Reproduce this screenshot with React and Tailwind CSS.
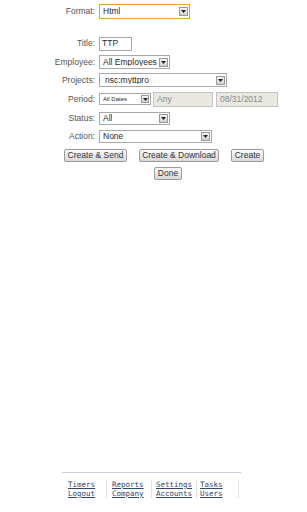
import React from "react";

function Arrow({ box = "w-[9px] h-[9px]" }) {
  return (
    <span
      className={`${box} mr-[1px] flex items-center justify-center border border-[#9a9a9a] bg-gradient-to-b from-[#f6f6f6] to-[#d2d2d2] shrink-0`}
    >
      <svg width="5" height="3" viewBox="0 0 5 3">
        <path d="M0 0h5L2.5 3z" fill="#222" />
      </svg>
    </span>
  );
}

function Select({ value, w, h, border = "border-[#a9a9a9]", text = "text-[8.5px]", box, pad = "pl-[3px]" }) {
  return (
    <div
      className={`${w} ${h} ${border} ${text} ${pad} border bg-white flex items-center justify-between text-[#2a2a2a] leading-none`}
    >
      <span className="truncate">{value}</span>
      <Arrow box={box} />
    </div>
  );
}

function Row({ label, h, children }) {
  return (
    <div className={`flex items-center ${h}`}>
      <div className="w-[96px] pr-[1px] text-right text-[#555]">{label}</div>
      <div className="ml-[3px] flex items-center">{children}</div>
    </div>
  );
}

function Button({ children, w }) {
  return (
    <div
      className={`${w} h-[13px] flex items-center justify-center rounded-[2px] border border-[#9b9b9b] bg-gradient-to-b from-[#fafafa] to-[#d9d9d9] text-[#333] leading-none`}
    >
      {children}
    </div>
  );
}

const links = [
  ["Timers", "Logout", "w-[45px] pl-[6px]"],
  ["Reports", "Company", "w-[45px] pl-[5px]"],
  ["Settings", "Accounts", "w-[45px] pl-[4px]"],
  ["Tasks", "Users", "w-[42px] pl-[3px]"],
];

export default function App() {
  return (
    <div
      className="h-[512px] bg-white flex flex-col text-[8.5px]"
      style={{ fontFamily: '"Liberation Sans", Arial, sans-serif' }}
    >
      <div className="pt-[2px]">
        <Row label="Format:" h="h-[18px]">
          <Select value="Html" w="w-[91px]" h="h-[15px]" border="border-[#e3a33a]" />
        </Row>
        <div className="h-[14px]" />
        <Row label="Title:" h="h-[19px]">
          <div className="w-[33px] h-[14px] border border-[#a9a9a9] bg-white pl-[2px] flex items-center text-[#2a2a2a] leading-none">
            TTP
          </div>
        </Row>
        <Row label="Employee:" h="h-[18px]">
          <Select value="All Employees" w="w-[71px]" h="h-[14px]" />
        </Row>
        <Row label="Projects:" h="h-[18px]">
          <Select value="nsc:myttpro" w="w-[128px]" h="h-[14px]" pad="pl-[5px]" />
        </Row>
        <Row label="Period:" h="h-[20px]">
          <Select value="All Dates" w="w-[52px]" h="h-[12px]" text="text-[6px]" box="w-[8px] h-[8px]" />
          <div className="ml-[2px] w-[60px] h-[15px] border border-[#c4c4c4] bg-[#e9e9e1] pl-[3px] flex items-center text-[#8a8a8a] leading-none">
            Any
          </div>
          <div className="ml-[3px] w-[62px] h-[15px] border border-[#c4c4c4] bg-[#e9e9e1] pl-[3px] flex items-center text-[#8a8a8a] leading-none">
            08/31/2012
          </div>
        </Row>
        <Row label="Status:" h="h-[19px]">
          <Select value="All" w="w-[71px]" h="h-[13px]" />
        </Row>
        <Row label="Action:" h="h-[17px]">
          <Select value="None" w="w-[113px]" h="h-[13px]" />
        </Row>
        <div className="h-[20px] flex items-center pl-[64px] gap-[12px]">
          <Button w="w-[63px]">Create &amp; Send</Button>
          <Button w="w-[80px]">Create &amp; Download</Button>
          <Button w="w-[33px]">Create</Button>
        </div>
        <div className="h-[16px] flex items-center pl-[154px]">
          <Button w="w-[28px]">Done</Button>
        </div>
      </div>

      <div className="flex-1" />

      <div className="ml-[62px] w-[179px] border-t border-[#c9d1dd] pt-[7px] pb-[14px] flex">
        {links.map(([a, b, cls]) => (
          <div
            key={a}
            className={`${cls} border-r border-[#e0e0e0] flex flex-col text-[7.5px] leading-[9px] text-[#34466a]`}
            style={{ fontFamily: '"DejaVu Sans Mono", "Liberation Mono", monospace' }}
          >
            <a className="underline">{a}</a>
            <a className="underline">{b}</a>
          </div>
        ))}
      </div>
    </div>
  );
}
